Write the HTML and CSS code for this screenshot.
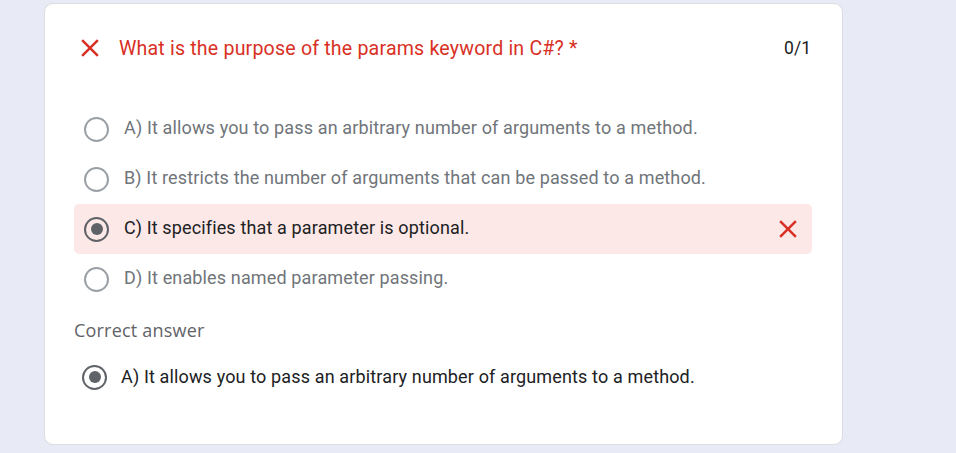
FILE: index.html
```html
<!DOCTYPE html>
<html>
<head>
<meta charset="utf-8">
<link rel="stylesheet" href="styles.css">
</head>
<body>
<div class="page">
  <div class="card">
    <div class="header">
      <span class="xicon">
        <svg width="30" height="30" viewBox="0 0 24 24"><path d="M19 6.41L17.59 5 12 10.59 6.41 5 5 6.41 10.59 12 5 17.59 6.41 19 12 13.41 17.59 19 19 17.59 13.41 12z" fill="#d93025"/></svg>
      </span>
      <span class="title">What is the purpose of the params keyword in C#? *</span>
      <span class="score">0/1</span>
    </div>
    <div class="options">
      <div class="opt"><span class="radio"></span><span class="otext">A) It allows you to pass an arbitrary number of arguments to a method.</span></div>
      <div class="opt"><span class="radio"></span><span class="otext">B) It restricts the number of arguments that can be passed to a method.</span></div>
      <div class="opt wrong"><span class="radio checked"></span><span class="otext">C) It specifies that a parameter is optional.</span>
        <span class="wx"><svg width="30" height="30" viewBox="0 0 24 24"><path d="M19 6.41L17.59 5 12 10.59 6.41 5 5 6.41 10.59 12 5 17.59 6.41 19 12 13.41 17.59 19 19 17.59 13.41 12z" fill="#d93025"/></svg></span>
      </div>
      <div class="opt"><span class="radio"></span><span class="otext">D) It enables named parameter passing.</span></div>
    </div>
    <div class="correct-label">Correct answer</div>
    <div class="correct"><span class="radio checked"></span><span class="otext">A) It allows you to pass an arbitrary number of arguments to a method.</span></div>
  </div>
</div>
</body>
</html>
```
FILE: styles.css
```css
html, body { margin: 0; padding: 0; }
body { background: #e8ebf6; font-family: Roboto, "Noto Sans", sans-serif; }
.page { padding: 3px 113px 0 44px; height: 453px; box-sizing: border-box; overflow: hidden; }
.card {
  background: #fff;
  border: 1px solid #dadce0;
  border-radius: 9px;
  padding: 24px 30px 43px 29px;
  width: 799px;
  box-sizing: border-box;
}
.header { display: flex; align-items: center; height: 40px; }
.xicon { width: 30px; height: 30px; margin-left: 1px; display: flex; }
.title { color: #d93025; font-size: 19.6px; letter-spacing: 0.18px; margin-left: 14px; flex: 1; }
.score { color: #202124; font-size: 17.5px; margin-right: 1px; }
.options { margin-top: 36px; }
.opt { display: flex; align-items: center; height: 50px; padding-left: 10px; border-radius: 5px; }
.opt.wrong { background: #fce8e6; }
.radio {
  width: 25px; height: 25px; box-sizing: border-box;
  border: 2.5px solid #9aa0a6; border-radius: 50%;
  display: flex; align-items: center; justify-content: center;
  flex: none;
}
.radio.checked { border-color: #5f6368; }
.radio.checked::after { content: ""; width: 12px; height: 12px; border-radius: 50%; background: #5f6368; }
.otext { color: #70757a; font-size: 18px; line-height: 22px; letter-spacing: 0.14px; margin-left: 15px; flex: 1; padding-bottom: 2px; }
.wrong .otext { color: #202124; }
.wx { display: flex; margin-right: 9px; }
.correct-label { color: #5f6368; font-size: 18px; letter-spacing: 0.2px; margin-top: 16px; line-height: 20px; font-family: "Open Sans", Roboto, sans-serif; }
.correct { display: flex; align-items: center; height: 48px; padding-left: 8px; margin-top: 13px; }
.correct .otext { color: #202124; margin-left: 14px; padding-bottom: 0; }
```
